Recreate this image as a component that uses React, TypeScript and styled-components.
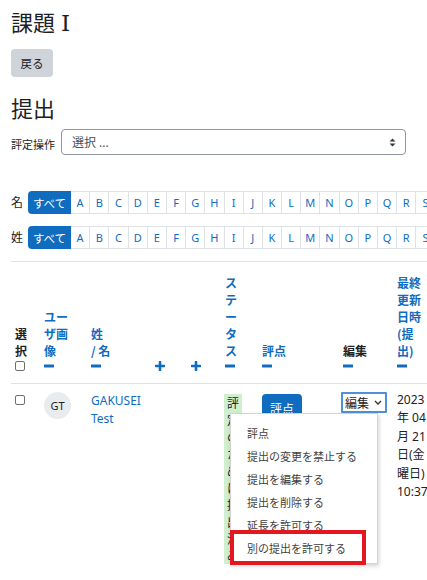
import React from "react";
import styled, { createGlobalStyle } from "styled-components";

const BLUE = "#0f6cbf";

const GlobalStyle = createGlobalStyle`
  html, body { margin: 0; padding: 0; background: #fff; overflow: hidden; }
  body {
    font-family: "Noto Sans", "Noto Sans CJK JP", sans-serif;
    color: #1d2125;
    font-size: 12px;
  }
  * { box-sizing: border-box; }
`;

const Page = styled.div`
  position: relative;
  padding: 8px 0 0 11px;
  min-height: 580px;
`;

const Title = styled.h2`
  margin: 0;
  height: 27px;
  font-family: "Noto Sans CJK JP", sans-serif;
  font-size: 22px;
  line-height: 27px;
  font-weight: 400;
`;

const Numeral = styled.span`
  margin-left: 6px;
  font-family: "DejaVu Serif", "Liberation Serif", serif;
  font-size: 23px;
  line-height: 1;
  font-weight: 400;
`;

const BackButton = styled.button`
  display: flex;
  align-items: center;
  justify-content: center;
  margin-top: 14px;
  width: 42px;
  height: 28px;
  padding: 0;
  border: none;
  border-radius: 4px;
  background: #ced4da;
  color: #1d2125;
  font-family: "Noto Sans CJK JP", sans-serif;
  font-size: 11.5px;
`;

const SubTitle = styled.h3`
  margin: 17px 0 0;
  font-family: "Noto Sans CJK JP", sans-serif;
  font-size: 22px;
  line-height: 27px;
  font-weight: 400;
`;

const FilterRow = styled.div`
  display: flex;
  align-items: center;
  gap: 6px;
  margin-top: 8px;
`;

const FilterLabel = styled.span`
  font-size: 11px;
  padding-top: 4px;
`;

const FakeSelect = styled.div`
  display: flex;
  align-items: center;
  justify-content: space-between;
  width: 345px;
  height: 26px;
  padding: 0 9px 0 10px;
  border: 1px solid #8f959e;
  border-radius: 4px;
  color: #495057;
  font-size: 12px;
`;

const InitialRow = styled.div<{ $mt: number }>`
  display: flex;
  align-items: center;
  margin-top: ${(p) => p.$mt}px;
  white-space: nowrap;
`;

const InitialLabel = styled.span`
  width: 17px;
  flex: none;
  font-size: 12px;
  padding-bottom: 2px;
`;

const AllButton = styled.span`
  flex: none;
  display: flex;
  align-items: center;
  justify-content: center;
  width: 43px;
  height: 23px;
  background: ${BLUE};
  color: #fff;
  border-radius: 4px 0 0 4px;
  font-size: 11.5px;
  position: relative;
  z-index: 1;
`;

const Letter = styled.span`
  flex: none;
  display: flex;
  align-items: center;
  justify-content: center;
  width: 20.2px;
  height: 23px;
  margin-left: -1px;
  border: 1px solid #dee2e6;
  color: ${BLUE};
  font-size: 11px;
`;

const Table = styled.table`
  margin-top: 12px;
  border-collapse: collapse;
  table-layout: fixed;
  width: 449px;
  border-top: 1px solid #dee2e6;
`;

const Th = styled.th<{ $w: number; $link?: boolean }>`
  width: ${(p) => p.$w}px;
  padding: 12px 0 7px 4px;
  vertical-align: bottom;
  text-align: left;
  font-family: "Noto Sans CJK JP", sans-serif;
  font-weight: 700;
  font-size: 12px;
  line-height: 17px;
  white-space: nowrap;
  color: ${(p) => (p.$link ? BLUE : "#1d2125")};
  border-bottom: 1px solid #dee2e6;
`;

const IconLine = styled.div`
  display: flex;
  align-items: center;
  height: 17px;
  padding-bottom: 4px;
`;

const Td = styled.td<{ $pt: number; $pl?: number }>`
  padding: ${(p) => p.$pt}px 0 0 ${(p) => p.$pl ?? 4}px;
  vertical-align: top;
  font-size: 12px;
`;

const Check = styled.input`
  appearance: none;
  display: block;
  width: 10px;
  height: 10px;
  margin: 0;
  border: 1px solid #6f6f6f;
  border-radius: 2px;
  background: #fff;
`;

const Avatar = styled.div`
  width: 27px;
  height: 27px;
  border-radius: 50%;
  background: #e9ecef;
  display: flex;
  align-items: center;
  justify-content: center;
  font-size: 11px;
  color: #1d2125;
`;

const NameLink = styled.a`
  display: block;
  color: ${BLUE};
  line-height: 18px;
  text-decoration: none;
  font-size: 12px;
`;

const Status = styled.div`
  width: 18px;
  padding: 0 2px 0 3px;
  background: #cfefcf;
  font-family: "Noto Sans CJK JP", sans-serif;
  font-size: 12px;
  line-height: 17px;
  word-break: break-all;
  color: #1d2125;
`;

const GradeButton = styled.span`
  display: flex;
  align-items: center;
  justify-content: center;
  width: 40px;
  height: 28px;
  border-radius: 4px;
  background: ${BLUE};
  color: #fff;
  font-family: "Noto Sans CJK JP", sans-serif;
  font-size: 12px;
`;

const EditSelect = styled.div`
  display: inline-flex;
  align-items: center;
  gap: 5px;
  height: 21px;
  margin-left: -2px;
  padding: 0 3px 0 2px;
  border: 2px solid #4f90d9;
  border-radius: 1px;
  font-family: "Noto Sans CJK JP", sans-serif;
  font-size: 12px;
  color: #1d2125;
  white-space: nowrap;
`;

const DateText = styled.div`
  line-height: 18.4px;
  white-space: nowrap;
  font-size: 12px;
`;

const Menu = styled.div`
  position: absolute;
  left: 230px;
  top: 413px;
  width: 148px;
  padding: 7px 0 4px;
  background: #fff;
  border: 1px solid #d4d4d4;
  box-shadow: 1px 2px 4px rgba(0, 0, 0, 0.18);
  z-index: 5;
`;

const MenuItem = styled.div`
  height: 23px;
  display: flex;
  align-items: center;
  padding-left: 16px;
  font-family: "Noto Sans CJK JP", sans-serif;
  font-size: 11px;
  color: #3f3f3f;
  white-space: nowrap;
`;

const Highlight = styled.div`
  position: absolute;
  left: -1px;
  top: 116px;
  width: 136px;
  height: 35px;
  border: 4px solid #e4161f;
`;

const Minus = () => (
  <svg width="10" height="4" viewBox="0 0 10 4">
    <rect x="0" y="0.5" width="10" height="3" rx="0.6" fill={BLUE} />
  </svg>
);

const Plus = () => (
  <svg width="10" height="10" viewBox="0 0 10 10">
    <path d="M5 1v8M1 5h8" stroke={BLUE} strokeWidth="2.6" strokeLinecap="round" />
  </svg>
);

const Caret = () => (
  <svg width="7" height="9" viewBox="0 0 7 9">
    <path d="M3.5 0.5L6.5 3.6H0.5Z M3.5 8.5L6.5 5.4H0.5Z" fill="#343a40" />
  </svg>
);

const Chevron = () => (
  <svg width="8" height="5" viewBox="0 0 8 5">
    <path d="M1 1l3 3 3-3" stroke="#333" strokeWidth="1.4" fill="none" />
  </svg>
);

const LETTERS = "ABCDEFGHIJKLMNOPQRS".split("");

const Initials = ({ label, mt }: { label: string; mt: number }) => (
  <InitialRow $mt={mt}>
    <InitialLabel>{label}</InitialLabel>
    <AllButton>すべて</AllButton>
    {LETTERS.map((l) => (
      <Letter key={l}>{l}</Letter>
    ))}
  </InitialRow>
);

const MENU = [
  "評点",
  "提出の変更を禁止する",
  "提出を編集する",
  "提出を削除する",
  "延長を許可する",
  "別の提出を許可する",
];

export default function App() {
  return (
    <>
      <GlobalStyle />
      <Page>
        <Title>
          課題<Numeral>Ⅰ</Numeral>
        </Title>
        <BackButton>戻る</BackButton>
        <SubTitle>提出</SubTitle>
        <FilterRow>
          <FilterLabel>評定操作</FilterLabel>
          <FakeSelect>
            <span>選択 ...</span>
            <Caret />
          </FakeSelect>
        </FilterRow>
        <Initials label="名" mt={36} />
        <Initials label="姓" mt={12} />
        <Table>
          <thead>
            <tr>
              <Th $w={29}>
                選<br />択
                <IconLine>
                  <Check type="checkbox" />
                </IconLine>
              </Th>
              <Th $w={47} $link>
                ユー<br />ザ画<br />像
                <IconLine>
                  <Minus />
                </IconLine>
              </Th>
              <Th $w={64} $link>
                姓<br />/ 名
                <IconLine>
                  <Minus />
                </IconLine>
              </Th>
              <Th $w={36}>
                <IconLine>
                  <Plus />
                </IconLine>
              </Th>
              <Th $w={34}>
                <IconLine>
                  <Plus />
                </IconLine>
              </Th>
              <Th $w={37} $link>
                ス<br />テ<br />ー<br />タ<br />ス
                <IconLine>
                  <Minus />
                </IconLine>
              </Th>
              <Th $w={81} $link>
                評点
                <IconLine>
                  <Minus />
                </IconLine>
              </Th>
              <Th $w={54}>
                編集
                <IconLine>
                  <Minus />
                </IconLine>
              </Th>
              <Th $w={67} $link>
                最終<br />更新<br />日時<br />(提<br />出)
                <IconLine>
                  <Minus />
                </IconLine>
              </Th>
            </tr>
          </thead>
          <tbody>
            <tr>
              <Td $pt={11}>
                <Check type="checkbox" />
              </Td>
              <Td $pt={8}>
                <Avatar>GT</Avatar>
              </Td>
              <Td $pt={8}>
                <NameLink href="#">
                  GAKUSEI
                  <br />
                  Test
                </NameLink>
              </Td>
              <Td $pt={8} />
              <Td $pt={8} />
              <Td $pt={10} $pl={3}>
                <Status>評定のために提出済み</Status>
              </Td>
              <Td $pt={10}>
                <GradeButton>評点</GradeButton>
              </Td>
              <Td $pt={8}>
                <EditSelect>
                  編集
                  <Chevron />
                </EditSelect>
              </Td>
              <Td $pt={7}>
                <DateText>
                  2023
                  <br />
                  年 04
                  <br />
                  月 21
                  <br />
                  日(金
                  <br />
                  曜日)
                  <br />
                  10:37
                </DateText>
              </Td>
            </tr>
          </tbody>
        </Table>
        <Menu>
          {MENU.map((m) => (
            <MenuItem key={m}>{m}</MenuItem>
          ))}
          <Highlight />
        </Menu>
      </Page>
    </>
  );
}
